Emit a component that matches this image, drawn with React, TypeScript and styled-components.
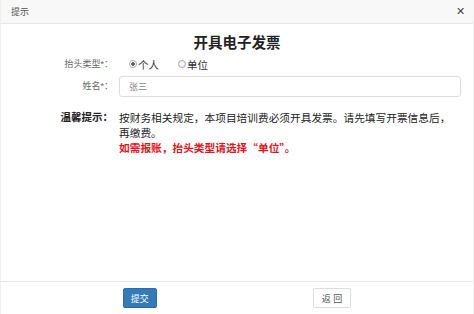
import React, { useState } from "react";
import styled, { createGlobalStyle } from "styled-components";

const GlobalStyle = createGlobalStyle`
  html, body {
    margin: 0;
    padding: 0;
    background: #ffffff;
  }
  body {
    font-family: "Liberation Sans", "Noto Sans CJK SC", sans-serif;
  }
`;

const Dialog = styled.div`
  display: flex;
  flex-direction: column;
  width: 474px;
  height: 314px;
  box-sizing: border-box;
  background: #fff;
  border-left: 1px solid #f0f0f0;
  border-right: 1px solid #f0f0f0;
`;

const Header = styled.div`
  display: flex;
  align-items: center;
  justify-content: space-between;
  height: 23px;
  padding: 0 8px 0 10px;
  background: #f8f8f8;
  border-bottom: 1px solid #e6e6e6;
  font-size: 9px;
  color: #555;
`;

const Close = styled.span`
  font-size: 11px;
  color: #444;
  cursor: pointer;
`;

const Body = styled.div`
  flex: 1;
  padding-top: 9px;
`;

const Title = styled.div`
  text-align: center;
  font-size: 14.5px;
  font-weight: 700;
  color: #222;
  line-height: 20px;
  margin-bottom: 1px;
`;

const Row = styled.div<{ $top?: number }>`
  display: grid;
  grid-template-columns: 112px 1fr;
  column-gap: 6px;
  align-items: ${(p) => (p.$top && p.$top > 5 ? "start" : "center")};
  padding-right: 12px;
  margin-top: ${(p) => p.$top ?? 0}px;
`;

const Label = styled.div<{ $strong?: boolean }>`
  text-align: right;
  font-size: ${(p) => (p.$strong ? "10.5px" : "9px")};
  font-weight: ${(p) => (p.$strong ? 700 : 400)};
  color: ${(p) => (p.$strong ? "#222" : "#666")};
  line-height: 15px;
`;

const Radios = styled.div`
  display: flex;
  gap: 19px;
  height: 20px;
  align-items: center;
  padding-left: 10px;
`;

const RadioItem = styled.label`
  display: flex;
  align-items: center;
  gap: 1px;
  font-size: 10.5px;
  color: #333;
  cursor: pointer;
`;

const Dot = styled.span<{ $on: boolean }>`
  width: 6px;
  height: 6px;
  border-radius: 50%;
  border: 1px solid #aaa;
  background: ${(p) => (p.$on ? "radial-gradient(circle, #666 0 1.6px, #fff 2px)" : "#f4f4f4")};
`;

const Input = styled.input`
  box-sizing: border-box;
  width: 100%;
  height: 21px;
  border: 1px solid #ddd;
  border-radius: 3px;
  padding: 0 9px;
  font-size: 9px;
  font-family: inherit;
  color: #333;
  outline: none;
  &::placeholder {
    color: #888;
  }
`;

const Notice = styled.div`
  font-family: "Noto Sans CJK SC", sans-serif;
  font-size: 10.7px;
  line-height: 15px;
  color: #222;
  max-width: 336px;
`;

const Red = styled.div`
  color: #e8141b;
  font-weight: 700;
`;

const Footer = styled.div`
  display: flex;
  justify-content: center;
  align-items: center;
  gap: 156px;
  height: 32px;
  border-top: 1px solid #e6e6e6;
`;

const Button = styled.button<{ $primary?: boolean }>`
  height: 20px;
  padding: 0 ${(p) => (p.$primary ? 7 : 8)}px;
  border-radius: 2px;
  font-size: 9px;
  font-family: inherit;
  cursor: pointer;
  border: 1px solid ${(p) => (p.$primary ? "#2e6da4" : "#ddd")};
  background: ${(p) => (p.$primary ? "#337ab7" : "#fff")};
  color: ${(p) => (p.$primary ? "#fff" : "#555")};
`;

const App = () => {
  const [type, setType] = useState<string>("个人");

  return (
    <>
      <GlobalStyle />
      <Dialog lang="zh-CN">
        <Header>
          <span>提示</span>
          <Close>✕</Close>
        </Header>
        <Body>
          <Title>开具电子发票</Title>
          <Row>
            <Label>抬头类型*：</Label>
            <Radios>
              {["个人", "单位"].map((t) => (
                <RadioItem key={t} onClick={() => setType(t)}>
                  <Dot $on={type === t} />
                  {t}
                </RadioItem>
              ))}
            </Radios>
          </Row>
          <Row $top={2}>
            <Label>姓名*：</Label>
            <Input placeholder="张三" />
          </Row>
          <Row $top={13}>
            <Label $strong>温馨提示：</Label>
            <Notice>
              按财务相关规定，本项目培训费必须开具发票。请先填写开票信息后，再缴费。
              <Red>如需报账，抬头类型请选择“单位”。</Red>
            </Notice>
          </Row>
        </Body>
        <Footer>
          <Button $primary>提交</Button>
          <Button>返&nbsp;回</Button>
        </Footer>
      </Dialog>
    </>
  );
};

export default App;
